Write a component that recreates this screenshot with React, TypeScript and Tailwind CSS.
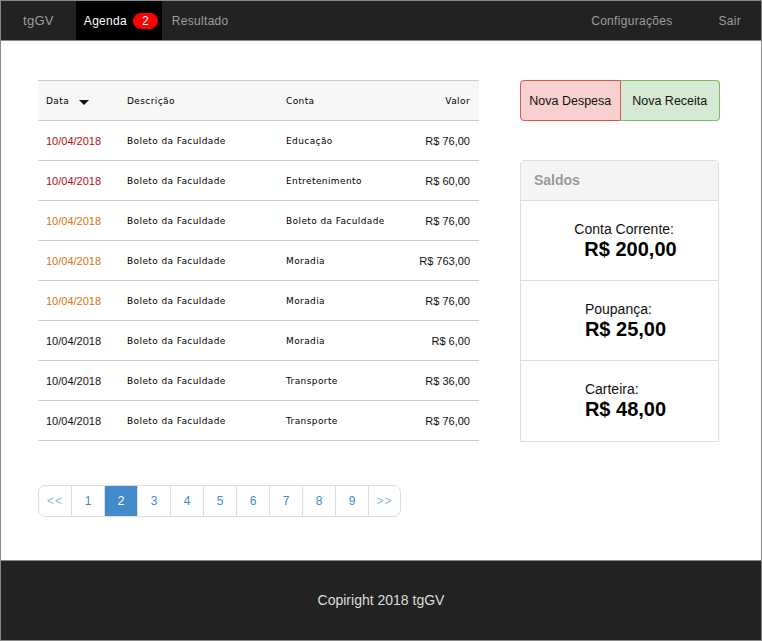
const rows = [
  { date: "10/04/2018", tone: "text-[#b01010]", conta: "Educação", valor: "R$ 76,00" },
  { date: "10/04/2018", tone: "text-[#b01010]", conta: "Entretenimento", valor: "R$ 60,00" },
  { date: "10/04/2018", tone: "text-[#d9730d]", conta: "Boleto da Faculdade", valor: "R$ 76,00" },
  { date: "10/04/2018", tone: "text-[#d9730d]", conta: "Moradia", valor: "R$ 763,00" },
  { date: "10/04/2018", tone: "text-[#d9730d]", conta: "Moradia", valor: "R$ 76,00" },
  { date: "10/04/2018", tone: "text-[#111]", conta: "Moradia", valor: "R$ 6,00" },
  { date: "10/04/2018", tone: "text-[#111]", conta: "Transporte", valor: "R$ 36,00" },
  { date: "10/04/2018", tone: "text-[#111]", conta: "Transporte", valor: "R$ 76,00" },
];

const saldos = [
  { label: "Conta Corrente:", value: "R$ 200,00", indent: "pl-[10px]" },
  { label: "Poupança:", value: "R$ 25,00", indent: "" },
  { label: "Carteira:", value: "R$ 48,00", indent: "" },
];

const pages = ["<<", "1", "2", "3", "4", "5", "6", "7", "8", "9", ">>"];

const sans = "font-['Liberation_Sans',Arial,sans-serif]";
const small = "font-['DejaVu_Sans',Verdana,sans-serif] text-[9px] tracking-[0.4px] text-black";

export default function App() {
  return (
    <div className={`h-[641px] w-[762px] border border-[#888] flex flex-col bg-white ${sans}`}>
      <nav className="h-[40px] shrink-0 bg-[#222] border-b border-[#888] flex items-stretch text-[12px] tracking-[0.3px]">
        <div className="pl-[22px] pr-[22px] flex items-center text-[#9d9d9d] text-[13px]">tgGV</div>
        <div className="bg-black w-[86px] pl-[8px] flex items-center text-white">
          Agenda
          <span className="ml-[6px] bg-[#ff0000] rounded-full h-[16px] w-[25px] flex items-center justify-center text-[12px] leading-none">2</span>
        </div>
        <div className="pl-[10px] flex items-center text-[#9d9d9d]">Resultado</div>
        <div className="ml-auto flex items-center text-[#9d9d9d]">Configurações</div>
        <div className="ml-[46px] mr-[20px] flex items-center text-[#9d9d9d]">Sair</div>
      </nav>

      <main className="flex-1 flex px-[37px] pt-[39px] gap-[41px]">
        <div className="w-[441px]">
          <table className="w-full border-collapse">
            <thead>
              <tr className="bg-[#f7f7f7] h-[40px] border-t border-b border-[#ccc]">
                <th className={`${small} font-normal text-left pl-[8px] pt-[2px] w-[89px]`}>
                  <span className="inline-flex items-center">
                    Data
                    <svg className="ml-[10px] mt-[2px]" width="10" height="5" viewBox="0 0 10 5">
                      <path d="M0 0 H10 L5 5 Z" fill="#111" />
                    </svg>
                  </span>
                </th>
                <th className={`${small} font-normal text-left pt-[2px] w-[159px]`}>Descrição</th>
                <th className={`${small} font-normal text-left pt-[2px]`}>Conta</th>
                <th className={`${small} font-normal text-right pt-[2px] pr-[9px]`}>Valor</th>
              </tr>
            </thead>
            <tbody>
              {rows.map((r, i) => (
                <tr key={i} className="h-[40px] border-b border-[#ccc]">
                  <td className={`${r.tone} text-[11px] pl-[8px] pt-[2px]`}>{r.date}</td>
                  <td className={`${small} pt-[2px]`}>Boleto da Faculdade</td>
                  <td className={`${small} pt-[2px]`}>{r.conta}</td>
                  <td className="text-[11px] text-right pr-[9px] pt-[2px] text-[#111]">{r.valor}</td>
                </tr>
              ))}
            </tbody>
          </table>

          <div className="mt-[44px] inline-flex border border-[#ddd] rounded-[7px] overflow-hidden h-[32px]">
            {pages.map((p, i) => (
              <div
                key={p}
                className={`${i === 0 || i === 10 ? "w-[32px]" : "w-[33px]"} flex items-center justify-center text-[12px] ${i > 0 ? "border-l border-[#ddd]" : ""} ${
                  p === "2" ? "bg-[#428bca] text-white" : p.length === 2 ? "text-[#8fb7dc] text-[10px] tracking-[1px]" : "text-[#428bca]"
                }`}
              >
                {p}
              </div>
            ))}
          </div>
        </div>

        <div className="w-[200px]">
          <div className="flex h-[41px] text-[12.5px] text-[#111]">
            <div className="flex-1 flex items-center justify-center pt-[2px] bg-[#f8d0cf] border border-[#d9534f] rounded-l-[4px]">Nova Despesa</div>
            <div className="flex-1 flex items-center justify-center pt-[2px] bg-[#d6e9d2] border border-l-0 border-[#7dbd68] rounded-r-[4px]">Nova Receita</div>
          </div>

          <div className="mt-[39px] w-[199px] border border-[#ddd] rounded-t-[4px]">
            <div className="h-[40px] bg-[#f5f5f5] border-b border-[#ddd] flex items-center pl-[13px] text-[14px] font-bold text-[#999]">Saldos</div>
            {saldos.map((s, i) => (
              <div key={s.label} className={`h-[80px] flex items-center justify-center pl-[12px] ${i < 2 ? "border-b border-[#ddd]" : ""}`}>
                <div className="flex flex-col items-start">
                  <div className="text-[14px] text-[#111] leading-[16px]">{s.label}</div>
                  <div className={`text-[20px] font-bold text-black leading-[24px] ${s.indent}`}>{s.value}</div>
                </div>
              </div>
            ))}
          </div>
        </div>
      </main>

      <footer className="h-[80px] shrink-0 bg-[#222] border-t border-[#888] flex items-center justify-center text-[14px] text-[#ddd]">
        Copiright 2018 tgGV
      </footer>
    </div>
  );
}
